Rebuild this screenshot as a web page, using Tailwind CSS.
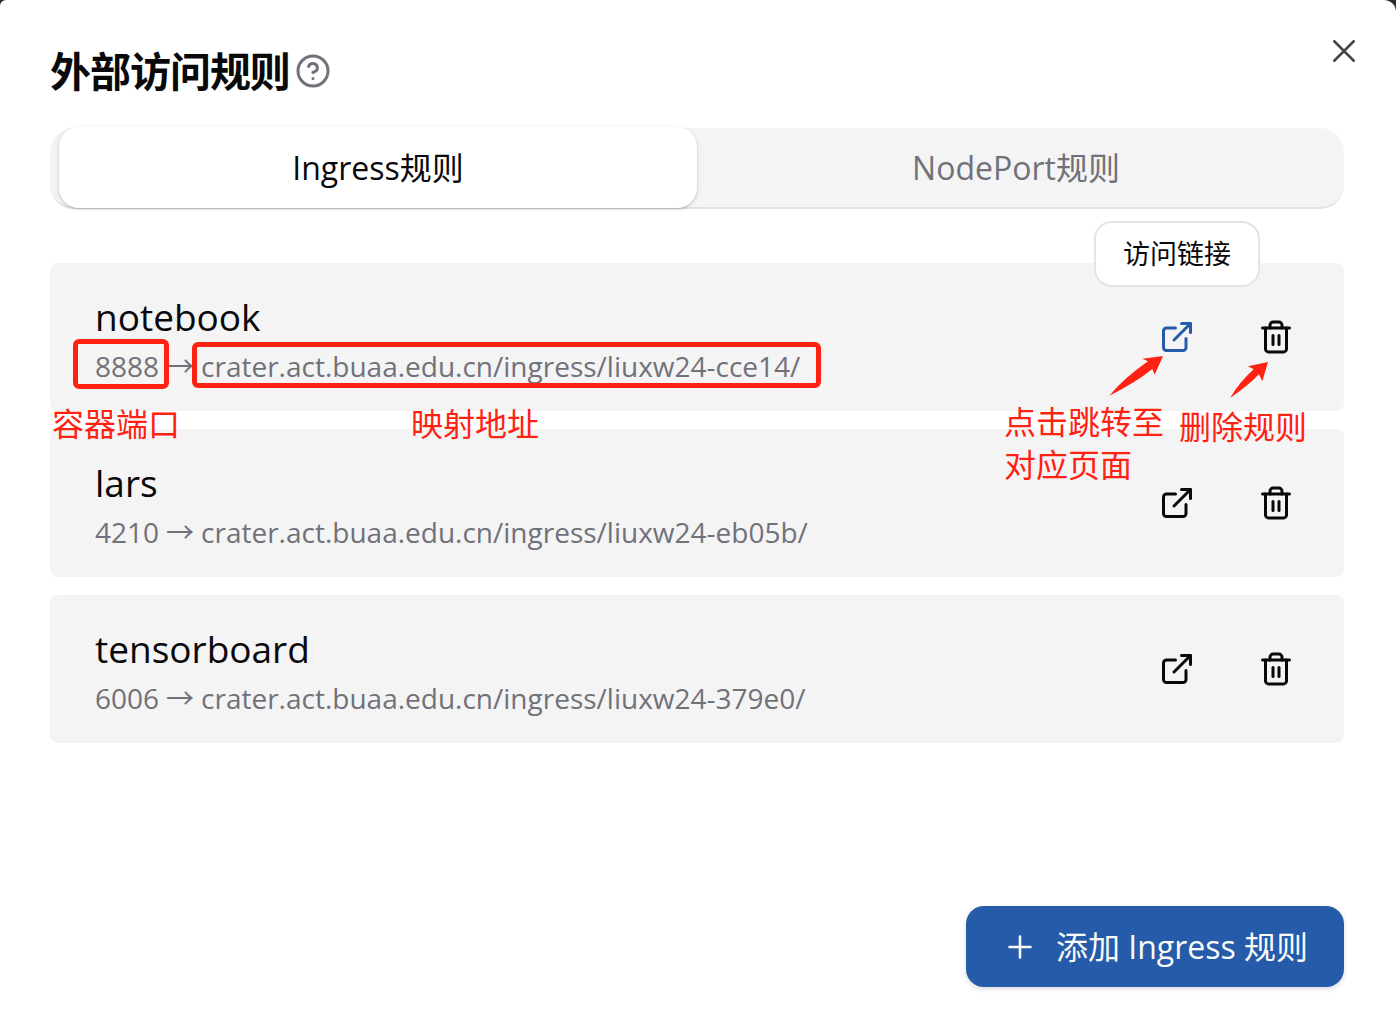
<!DOCTYPE html>
<html lang="zh-CN">
<head>
<meta charset="utf-8">
<meta name="viewport" content="width=device-width, initial-scale=1">
<title>外部访问规则</title>
<script src="https://cdn.jsdelivr.net/npm/@tailwindcss/browser@4"></script>
</head>
<body class="bg-[#2b2b2b] font-['Open_Sans','Noto_Sans_CJK_SC',sans-serif] text-[#09090b]">
<svg class="hidden" aria-hidden="true">
  <symbol id="external" viewBox="0 0 24 24" fill="none" stroke="currentColor" stroke-width="2" stroke-linecap="round" stroke-linejoin="round"><path d="M15 3h6v6"/><path d="M10 14 21 3"/><path d="M18 13v6a2 2 0 0 1-2 2H5a2 2 0 0 1-2-2V8a2 2 0 0 1 2-2h6"/></symbol>
  <symbol id="trash" viewBox="0 0 24 24" fill="none" stroke="currentColor" stroke-width="2" stroke-linecap="round" stroke-linejoin="round"><path d="M3 6h18"/><path d="M19 6v14c0 1-1 2-2 2H7c-1 0-2-1-2-2V6"/><path d="M8 6V4c0-1 1-2 2-2h4c1 0 2 1 2 2v2"/><path d="M10 11v6"/><path d="M14 11v6"/></symbol>
</svg>
<main role="dialog" aria-labelledby="title" class="relative flex min-h-screen flex-col rounded-tl-md rounded-tr-xl bg-white pt-11 pr-[52px] pb-[42px] pl-[50px]">
  <header class="flex h-[54px] items-center gap-[5px]">
    <h1 id="title" class="text-[41px] leading-[54px] font-bold tracking-tight">外部访问规则</h1>
    <button type="button" aria-label="帮助" class="text-[#71717a]">
      <svg class="size-9" viewBox="0 0 24 24" fill="none" stroke="currentColor" stroke-width="2" stroke-linecap="round" stroke-linejoin="round"><circle cx="12" cy="12" r="10"/><path d="M9.09 9a3 3 0 0 1 5.83 1c0 2-3 3-3 3"/><path d="M12 17h.01"/></svg>
    </button>
  </header>
  <button type="button" aria-label="关闭" class="absolute top-[33px] right-[34px] text-[#454547]">
    <svg class="size-9" viewBox="0 0 24 24" fill="none" stroke="currentColor" stroke-width="1.7" stroke-linecap="round" stroke-linejoin="round"><path d="M18.5 5.5 5.5 18.5"/><path d="m5.5 5.5 13 13"/></svg>
  </button>

  <div role="tablist" class="mt-[30px] flex h-[81px] items-center rounded-3xl border-b-2 border-[#e2e2e3] bg-[#f4f4f4] px-[9px] text-[32px] leading-10">
    <button type="button" role="tab" aria-selected="true" class="h-[81px] flex-1 rounded-[20px] bg-white shadow-[0_1px_2px_rgba(0,0,0,0.2),0_1px_6px_rgba(0,0,0,0.08)]">Ingress规则</button>
    <button type="button" role="tab" aria-selected="false" class="h-[81px] flex-1 text-[#71717a]">NodePort规则</button>
  </div>

  <ul class="mt-[54px] flex flex-col gap-[18px]">
    <li class="relative z-10 flex h-[148px] items-center justify-between rounded-lg bg-[#f4f4f4] pr-7 pl-[45px]">
      <div class="pt-1">
        <h2 class="text-[37px] leading-[54px]">notebook</h2>
        <p class="flex gap-[7px] text-[28px] leading-[44px] text-[#71717a]">
          <span class="relative">8888<span class="absolute -top-[5px] -right-[10px] -bottom-px -left-[22px] rounded-md border-5 border-[#ff2112]"></span></span>
          <span>→</span>
          <a href="#notebook" class="relative">crater.act.buaa.edu.cn/ingress/liuxw24-cce14/<span class="absolute -top-[2px] -right-[21px] bottom-0 -left-[9px] rounded-md border-5 border-[#ff2112]"></span></a>
        </p>
      </div>
      <p class="absolute top-[140px] left-[2px] text-[32px] leading-[42px] text-[#ff2112]">容器端口</p>
      <p class="absolute top-[140px] left-[361px] text-[32px] leading-[42px] text-[#ff2112]">映射地址</p>
      <div class="relative flex gap-[19px]">
        <a href="#notebook" aria-label="访问链接" class="grid size-20 place-items-center text-[#255ba8]"><svg class="size-9"><use href="#external"/></svg></a>
        <button type="button" aria-label="删除规则" class="grid size-20 place-items-center"><svg class="size-9"><use href="#trash"/></svg></button>
        <div role="tooltip" class="absolute bottom-[90px] -left-[43px] rounded-[18px] border-2 border-[#e4e4e7] bg-white px-[27px] py-[11px] text-[27px] leading-10 whitespace-nowrap">访问链接</div>
        <svg class="absolute top-[53px] -left-[37px] h-[50px] w-[200px] fill-[#ff2112]" viewBox="360 150 600 150" aria-hidden="true"><path d="M388 287Q430 236 504 184L487 176L549 168L524 224L517 207Q468 247 388 287Z"/><path d="M751 293Q776 249 821 208L804 199L864 186L847 244L837 223Q800 261 751 293Z"/></svg>
        <p class="absolute top-[103px] -left-[133px] text-[32px] leading-[43px] whitespace-nowrap text-[#ff2112]">点击跳转至<br>对应页面</p>
        <p class="absolute top-[108px] left-[42px] text-[32px] leading-[43px] whitespace-nowrap text-[#ff2112]">删除规则</p>
      </div>
    </li>
    <li class="flex h-[148px] items-center justify-between rounded-lg bg-[#f4f4f4] pr-7 pl-[45px]">
      <div class="pt-1">
        <h2 class="text-[37px] leading-[54px]">lars</h2>
        <p class="flex gap-[7px] text-[28px] leading-[44px] text-[#71717a]"><span>4210</span><span>→</span><a href="#lars">crater.act.buaa.edu.cn/ingress/liuxw24-eb05b/</a></p>
      </div>
      <div class="flex gap-[19px]">
        <a href="#lars" aria-label="访问链接" class="grid size-20 place-items-center"><svg class="size-9"><use href="#external"/></svg></a>
        <button type="button" aria-label="删除规则" class="grid size-20 place-items-center"><svg class="size-9"><use href="#trash"/></svg></button>
      </div>
    </li>
    <li class="flex h-[148px] items-center justify-between rounded-lg bg-[#f4f4f4] pr-7 pl-[45px]">
      <div class="pt-1">
        <h2 class="text-[37px] leading-[54px]">tensorboard</h2>
        <p class="flex gap-[7px] text-[28px] leading-[44px] text-[#71717a]"><span>6006</span><span>→</span><a href="#tensorboard">crater.act.buaa.edu.cn/ingress/liuxw24-379e0/</a></p>
      </div>
      <div class="flex gap-[19px]">
        <a href="#tensorboard" aria-label="访问链接" class="grid size-20 place-items-center"><svg class="size-9"><use href="#external"/></svg></a>
        <button type="button" aria-label="删除规则" class="grid size-20 place-items-center"><svg class="size-9"><use href="#trash"/></svg></button>
      </div>
    </li>
  </ul>

  <footer class="mt-auto flex justify-end">
    <button type="button" class="flex h-[81px] items-center gap-[18px] rounded-[18px] bg-[#255ba8] px-9 text-[32px] leading-10 text-[#fafafa] shadow-[0_2px_5px_rgba(0,0,0,0.15)]">
      <svg class="size-9" viewBox="0 0 24 24" fill="none" stroke="currentColor" stroke-width="1.7" stroke-linecap="round"><path d="M5 12h14"/><path d="M12 5v14"/></svg>
      添加 Ingress 规则
    </button>
  </footer>
</main>
</body>
</html>
